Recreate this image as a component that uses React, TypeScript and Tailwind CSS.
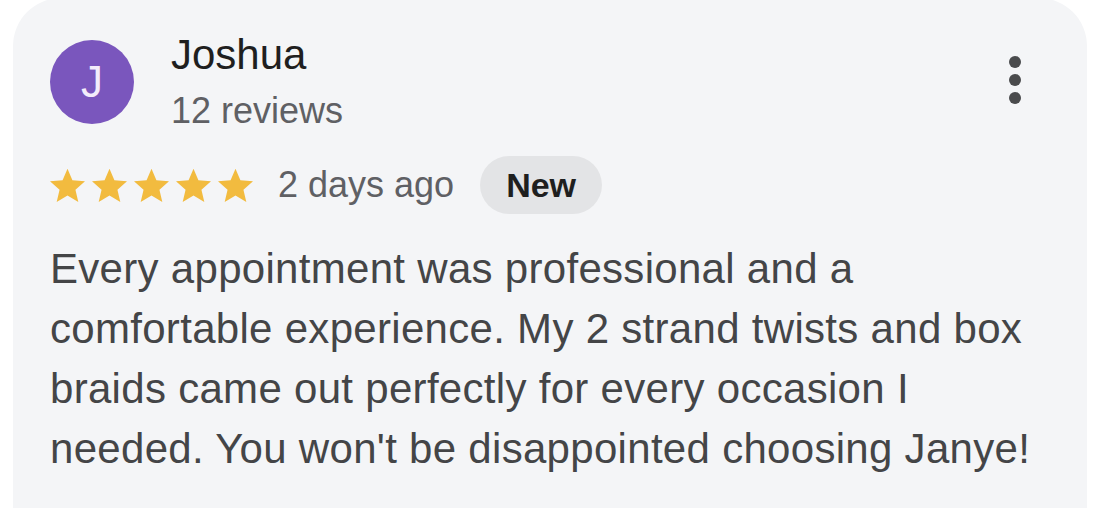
import React from "react";

function Star() {
  return (
    <svg width="35" height="35" viewBox="2 1.6 20 20" className="shrink-0">
      <path
        fill="#f2bb3f"
        d="M12 17.27L18.18 21l-1.64-7.03L22 9.24l-7.19-.61L12 2 9.19 8.63 2 9.24l5.46 4.73L5.82 21z"
      />
    </svg>
  );
}

function MoreIcon() {
  return (
    <div className="flex flex-col items-center gap-[6px]">
      <span className="block w-[12px] h-[12px] rounded-full bg-[#4a4b4d]" />
      <span className="block w-[12px] h-[12px] rounded-full bg-[#4a4b4d]" />
      <span className="block w-[12px] h-[12px] rounded-full bg-[#4a4b4d]" />
    </div>
  );
}

export default function App() {
  return (
    <div
      className="w-[1098px] h-[508px] overflow-hidden bg-white"
      style={{ fontFamily: '"Liberation Sans", Arial, sans-serif' }}
    >
      <div className="ml-[13px] mt-[-2px] w-[1074px] h-[560px] rounded-[48px] bg-[#f4f5f7] pl-[37px] pr-[40px] pt-[32px]">
        <div className="flex items-start">
          <div className="mt-[10px] w-[84px] h-[84px] rounded-full bg-[#7a56bd] flex items-center justify-center shrink-0">
            <span className="text-[44px] leading-none text-[#f3ecfb]">J</span>
          </div>
          <div className="ml-[37px] flex flex-col">
            <span className="text-[42px] leading-[50px] text-[#1f1f1f]">Joshua</span>
            <span className="mt-[9px] text-[36px] leading-[44px] text-[#5f6064]">12 reviews</span>
          </div>
          <div className="ml-auto mr-[26px] mt-[26px]">
            <MoreIcon />
          </div>
        </div>

        <div className="mt-[23px] flex items-center h-[58px]">
          <div className="flex items-center gap-[7px]">
            <Star />
            <Star />
            <Star />
            <Star />
            <Star />
          </div>
          <span className="ml-[25px] text-[36px] leading-none text-[#5f6064]">2 days ago</span>
          <span className="ml-[26px] h-[58px] px-[26px] rounded-full bg-[#e3e4e6] flex items-center text-[34px] font-semibold text-[#1f1f1f]">
            New
          </span>
        </div>

        <p className="mt-[25px] text-[42px] leading-[60px] tracking-[0.3px] text-[#444547]">
          Every appointment was professional and a comfortable experience. My 2 strand twists and box braids came out perfectly for every occasion I needed. You won't be disappointed choosing Janye!
        </p>
      </div>
    </div>
  );
}
